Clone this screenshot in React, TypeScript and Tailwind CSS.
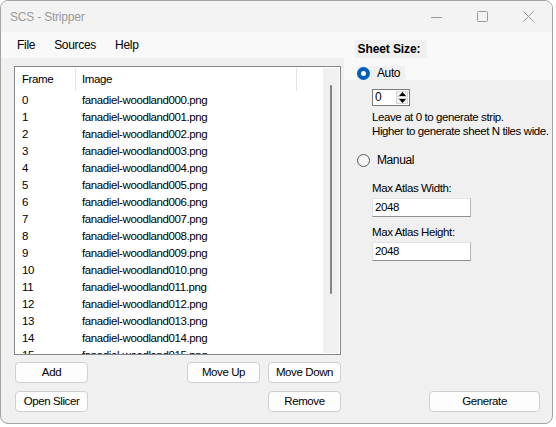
import React from 'react';

const rows = Array.from({ length: 16 }, (_, i) => ({
  frame: String(i),
  image: `fanadiel-woodland${String(i).padStart(3, '0')}.png`,
}));

const Btn: React.FC<{ label: string; className?: string }> = ({ label, className = '' }) => (
  <div
    className={`h-[21px] flex items-center justify-center bg-[#fdfdfd] border border-[#d0d0d0] rounded-[4px] text-black ${className}`}
  >
    {label}
  </div>
);

const Radio: React.FC<{ checked?: boolean }> = ({ checked }) =>
  checked ? (
    <div className="w-[13px] h-[13px] rounded-full bg-[#005fb8] flex items-center justify-center">
      <div className="w-[5px] h-[5px] rounded-full bg-white" />
    </div>
  ) : (
    <div className="w-[13px] h-[13px] rounded-full border border-[#5d5d5d] bg-[#f5f5f5]" />
  );

const Field: React.FC<{ value: string }> = ({ value }) => (
  <div className="w-[99px] h-[19px] bg-white border border-[#e3e3e3] border-b-[#8f8f8f] border-r-[#b5b5b5] flex items-center pl-[2px]">
    {value}
  </div>
);

export default function App() {
  return (
    <div className="w-[556px] h-[427px] bg-white font-['Liberation_Sans',Arial,sans-serif] text-[11.5px] tracking-[-0.4px] text-black">
      <div className="w-[553px] h-[424px] border border-[#a3a3a3] rounded-[8px] overflow-hidden flex flex-col bg-[#f0f0f0]">
        {/* title bar */}
        <div className="h-[31px] shrink-0 bg-[#f3f3f3] flex items-center">
          <span className="ml-[9px] text-[12px] text-[#9a9a9a] tracking-[-0.2px]">SCS - Stripper</span>
          <div className="ml-auto flex items-center">
            <svg width="46" height="31" viewBox="0 0 46 31">
              <line x1="17" y1="16.5" x2="28" y2="16.5" stroke="#9a9a9a" strokeWidth="1" />
            </svg>
            <svg width="46" height="31" viewBox="0 0 46 31">
              <rect x="17.5" y="10.5" width="10" height="10" rx="1" fill="none" stroke="#9a9a9a" strokeWidth="1" />
            </svg>
            <svg width="46" height="31" viewBox="0 0 46 31">
              <path d="M17.5 10.5 L27.5 20.5 M27.5 10.5 L17.5 20.5" stroke="#9a9a9a" strokeWidth="1" />
            </svg>
          </div>
        </div>

        {/* menu strip */}
        <div className="h-[26px] shrink-0 bg-[#f9f9f9] flex">
          <div className="flex items-center h-[26px] pl-[16px] gap-[19px] text-[12px] tracking-[-0.3px]">
            <span>File</span>
            <span>Sources</span>
            <span>Help</span>
          </div>
          <div className="ml-[216px] mt-[8px] h-[18px] w-[72px] bg-[#f0f0f0] flex items-center pl-[3px] font-bold text-[12px] tracking-[-0.1px]">
            Sheet Size:
          </div>
        </div>

        <div className="flex flex-1">
          {/* left column */}
          <div className="w-[343px] shrink-0 pl-[13px] pt-[8px] flex flex-col">
            <div className="w-[327px] h-[289px] border border-[#828790] bg-white flex overflow-hidden">
              <div className="flex-1 flex flex-col overflow-hidden">
                <div className="h-[25px] shrink-0 flex items-center relative">
                  <span className="absolute left-[7px]">Frame</span>
                  <div className="absolute left-[60px] top-[1px] h-[23px] w-px bg-[#e5e5e5]" />
                  <span className="absolute left-[67px]">Image</span>
                  <div className="absolute left-[281px] top-[1px] h-[23px] w-px bg-[#e5e5e5]" />
                </div>
                {rows.map((r) => (
                  <div key={r.frame} className="h-[17px] shrink-0 flex items-center whitespace-nowrap">
                    <span className="w-[67px] pl-[7px]">{r.frame}</span>
                    <span>{r.image}</span>
                  </div>
                ))}
              </div>
              <div className="w-[16px] shrink-0 bg-[#f0f0f0] mr-px my-px flex justify-center pt-[17px]">
                <div className="w-[2px] h-[209px] rounded-full bg-[#858585]" />
              </div>
            </div>
            <div className="flex mt-[7px] pl-px">
              <Btn label="Add" className="w-[73px]" />
              <Btn label="Move Up" className="w-[73px] ml-[99px]" />
              <Btn label="Move Down" className="w-[73px] ml-[8px]" />
            </div>
            <div className="flex mt-[8px] pl-px">
              <Btn label="Open Slicer" className="w-[73px]" />
              <Btn label="Remove" className="w-[73px] ml-[180px]" />
            </div>
          </div>

          {/* right column */}
          <div className="flex-1 flex flex-col">
            <div className="h-[22px] bg-[#f9f9f9] pt-[8px] pl-[13px]">
              <div className="w-[48px] h-[14px] bg-[#f0f0f0] flex items-center">
                <Radio checked />
                <span className="ml-[7px] text-[12px]">Auto</span>
              </div>
            </div>
            <div className="pl-[28px] pt-[9px]">
              <div className="w-[38px] h-[17px] border border-[#7a7a7a] bg-white flex">
                <span className="flex-1 pl-[2px] leading-[15px] text-[12px]">0</span>
                <div className="w-[14px] flex flex-col gap-px p-px">
                  <div className="flex-1 bg-[#f0f0f0] border border-[#d5d5d5] flex items-center justify-center">
                    <svg width="7" height="4" viewBox="0 0 7 4"><path d="M3.5 0 L7 4 L0 4 Z" fill="#000" /></svg>
                  </div>
                  <div className="flex-1 bg-[#f0f0f0] border border-[#d5d5d5] flex items-center justify-center">
                    <svg width="7" height="4" viewBox="0 0 7 4"><path d="M0 0 L7 0 L3.5 4 Z" fill="#000" /></svg>
                  </div>
                </div>
              </div>
              <div className="mt-[4px] leading-[14px] tracking-[-0.4px] whitespace-nowrap">
                <div>Leave at 0 to generate strip.</div>
                <div>Higher to generate sheet N tiles wide.</div>
              </div>
            </div>
            <div className="flex items-center pl-[13px] mt-[15px] h-[14px]">
              <Radio />
              <span className="ml-[7px] text-[12px]">Manual</span>
            </div>
            <div className="pl-[28px] mt-[14px] flex flex-col">
              <span className="leading-[14px]">Max Atlas Width:</span>
              <div className="mt-[3px]">
                <Field value="2048" />
              </div>
              <span className="leading-[14px] mt-[8px]">Max Atlas Height:</span>
              <div className="mt-[3px]">
                <Field value="2048" />
              </div>
            </div>
            <div className="mt-auto mb-[11px] pl-[85px]">
              <Btn label="Generate" className="w-[111px]" />
            </div>
          </div>
        </div>
      </div>
    </div>
  );
}
